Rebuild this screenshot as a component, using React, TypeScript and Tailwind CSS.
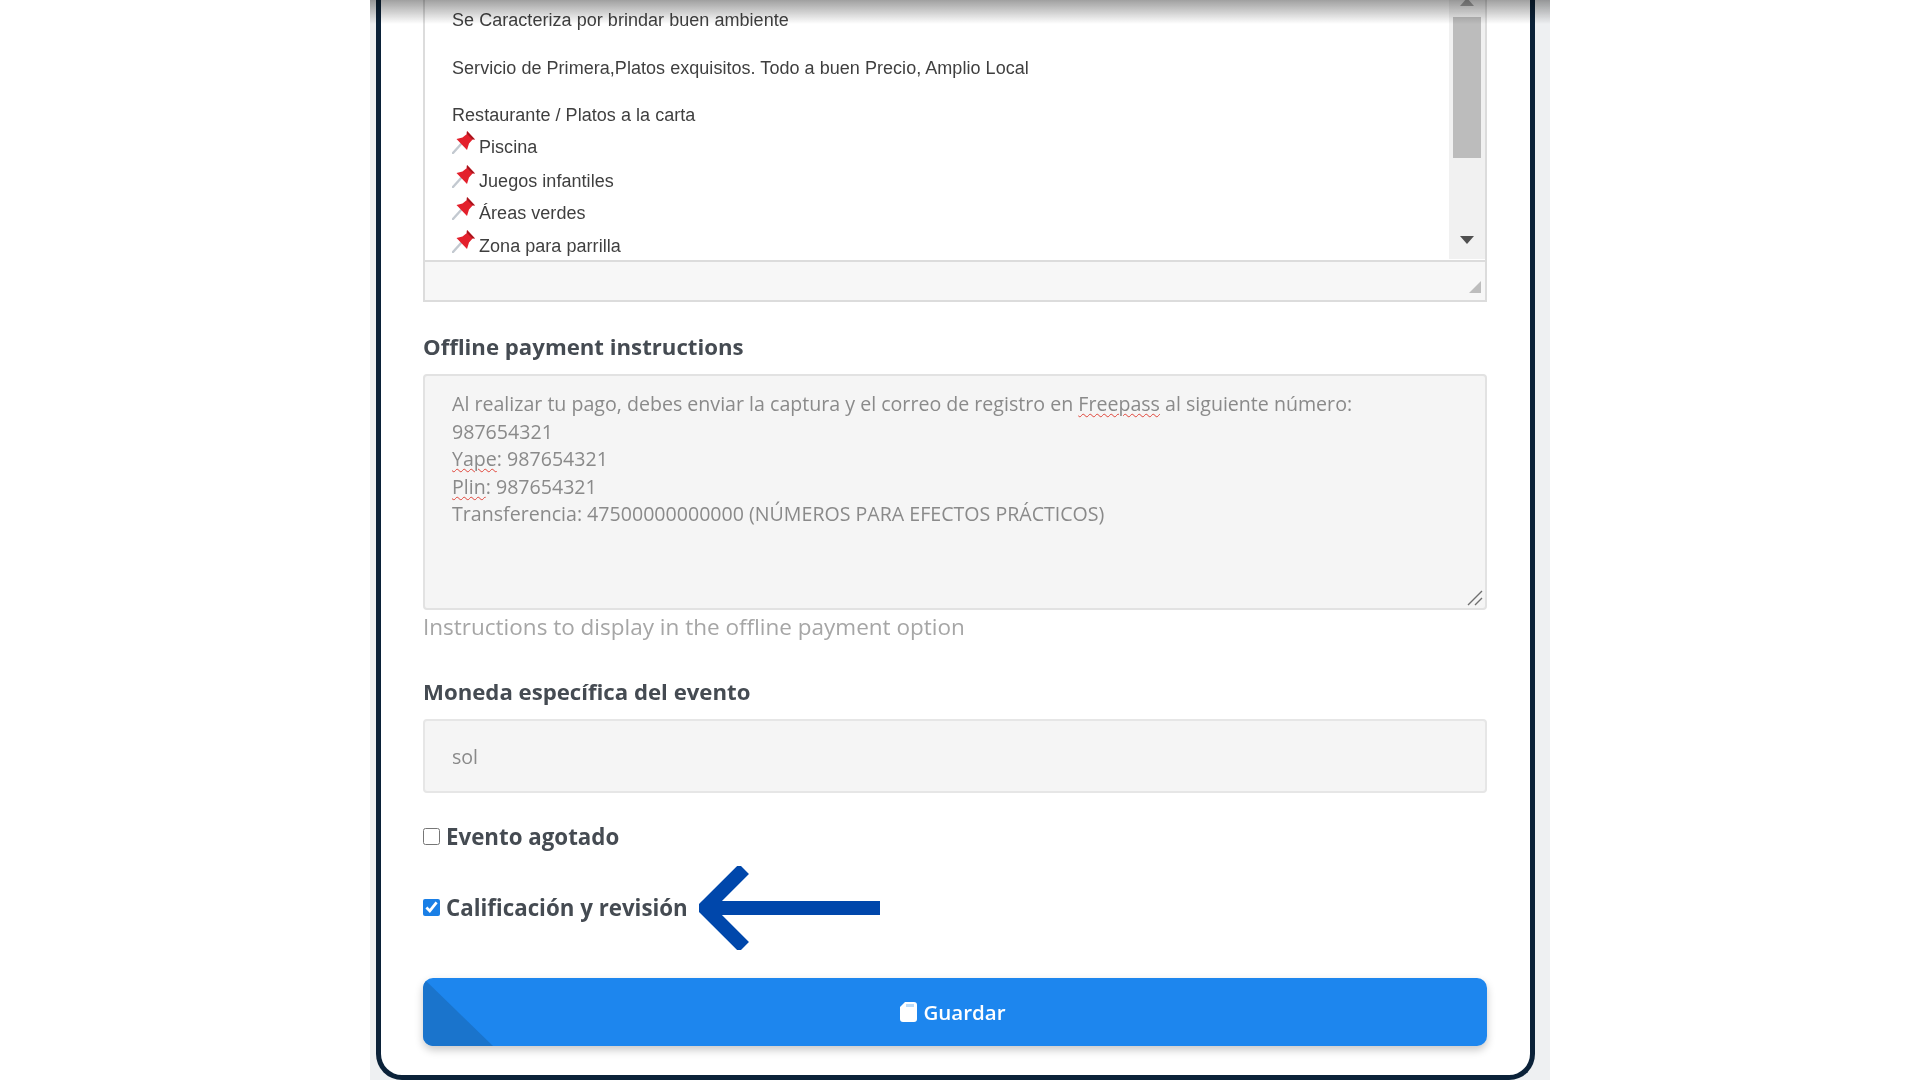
const Pin = () => (
  <svg width="24" height="24" viewBox="0 0 24 24" className="shrink-0">
    <path d="M1 23 L10 13" stroke="#c3c9d0" strokeWidth="2.4" strokeLinecap="round" />
    <path d="M4.5 9 L15 20 L17 13.5 L21 9 L23 9.5 L15 1 L15.5 3.5 L10.5 7.5 Z" fill="#e3202c" />
    <path d="M15 1 L23 9.5 L20.5 9.5 L14.5 3.5 Z" fill="#a8141c" />
  </svg>
);

const SaveIcon = () => (
  <svg width="17" height="20" viewBox="0 0 17 20">
    <path d="M5 0 H14 Q17 0 17 3 V17 Q17 20 14 20 H3 Q0 20 0 17 V5 Z" fill="#ffffff" />
    <rect x="6" y="2" width="8" height="3" fill="#bcdcf9" />
  </svg>
);

const Squiggle = ({ children }: { children: string }) => (
  <span className="underline decoration-wavy decoration-[#e0453a] decoration-1 underline-offset-2">{children}</span>
);

const pins = [
  { label: 'Piscina', className: 'h-[34px]' },
  { label: 'Juegos infantiles', className: 'h-[32px]' },
  { label: 'Áreas verdes', className: 'h-[33px]' },
  { label: 'Zona para parrilla', className: 'h-[33px]' },
];

const Editor = () => (
  <div className="border-2 border-t-0 border-[#dcdcdc] bg-white">
    <div className="flex h-[260px] overflow-hidden">
      <div className="flex-1 pl-[27px] pt-[8px] font-['Liberation_Sans',sans-serif] text-[18px] tracking-[0.04px] text-[#3f3f3f]">
        <p className="h-[24px] leading-[24px]">Se Caracteriza por brindar buen ambiente</p>
        <p className="mt-[24px] h-[24px] leading-[24px]">Servicio de Primera,Platos exquisitos. Todo a buen Precio, Amplio Local</p>
        <p className="mt-[23px] h-[24px] leading-[24px]">Restaurante / Platos a la carta</p>
        <div className="mt-[3px]">
          {pins.map((pin) => (
            <div key={pin.label} className={`flex items-start gap-[3px] ${pin.className}`}>
              <Pin />
              <span className="mt-[5px] leading-[24px]">{pin.label}</span>
            </div>
          ))}
        </div>
      </div>
      <div className="relative flex h-[259px] w-[36px] flex-col items-center bg-[#f1f1f1]">
        <div className="mt-[-2px] h-0 w-0 border-x-[7px] border-b-[8px] border-x-transparent border-b-[#a3a3a3]" />
        <div className="mt-[11px] h-[141px] w-[28px] bg-[#bcbcbc]" />
        <div className="mt-[78px] h-0 w-0 border-x-[7px] border-t-[8px] border-x-transparent border-t-[#505050]" />
      </div>
    </div>
    <div className="relative h-[40px] border-t-2 border-[#dcdcdc] bg-[#f7f7f7]">
      <svg width="14" height="14" viewBox="0 0 14 14" className="absolute bottom-[6px] right-[3px]">
        <path d="M13 1 V13 H1 Z" fill="#bdbdbd" />
      </svg>
    </div>
  </div>
);

export default function App() {
  return (
    <div className="flex h-screen items-end overflow-hidden bg-white pl-[370px] font-['Open_Sans',sans-serif] blur-[0.6px]">
      <div className="relative w-[1180px] shrink-0 bg-[#eef0f2] pl-[6px] pr-[15px]">
        <div className="absolute inset-x-0 top-0 z-10 h-[24px] bg-gradient-to-b from-[#a0a0a0] to-transparent mix-blend-multiply" />
        <div className="rounded-b-[26px] border-x-[5px] border-b-[5px] border-[#0b2239] bg-white pb-[29px] pl-[42px] pr-[43px]">
          <Editor />

          <label className="mt-[30px] block h-[30px] text-[22.2px] font-bold leading-[30px] text-[#454b52]">
            Offline payment instructions
          </label>
          <div className="relative mt-[12px] h-[236px] rounded-[4px] border-2 border-[#e2e2e2] bg-[#f5f5f5] pl-[27px] pt-[14px] text-[19.6px] leading-[27.5px] text-[#8a8a8a]">
            <p>
              Al realizar tu pago, debes enviar la captura y el correo de registro en <Squiggle>Freepass</Squiggle> al siguiente número:
            </p>
            <p>987654321</p>
            <p>
              <Squiggle>Yape</Squiggle>: 987654321
            </p>
            <p>
              <Squiggle>Plin</Squiggle>: 987654321
            </p>
            <p>Transferencia: 47500000000000 (NÚMEROS PARA EFECTOS PRÁCTICOS)</p>
            <svg width="18" height="18" viewBox="0 0 18 18" className="absolute bottom-[1px] right-[1px]">
              <path d="M2 16 L16 2 M9 16 L16 9" stroke="#6f6f6f" strokeWidth="1.4" />
            </svg>
          </div>
          <p className="mt-[2px] h-[30px] text-[22.5px] leading-[30px] text-[#a6a6a6]">Instructions to display in the offline payment option</p>

          <label className="mt-[35px] block h-[30px] text-[22.2px] font-bold leading-[30px] text-[#454b52]">
            Moneda específica del evento
          </label>
          <input
            readOnly
            value="sol"
            className="mt-[12px] block h-[74px] w-full rounded-[4px] border-2 border-[#e6e6e6] bg-[#f5f5f5] pl-[27px] text-[19.6px] text-[#8a8a8a] outline-none"
          />

          <label className="mt-[29px] flex h-[30px] items-center gap-[6px] text-[22.3px] font-bold text-[#454b52]">
            <input type="checkbox" className="mb-[1px] h-[17px] w-[17px] accent-[#1a7fe6]" />
            Evento agotado
          </label>

          <div className="relative mt-[41px]">
            <label className="flex h-[30px] items-center gap-[6px] text-[22.3px] font-bold text-[#454b52]">
              <input type="checkbox" defaultChecked className="mb-[2px] h-[17px] w-[17px] accent-[#1a7fe6]" />
              Calificación y revisión
            </label>
            <svg width="182" height="84" viewBox="0 0 182 84" className="absolute left-[276px] top-[-27px]">
              <path d="M181 42 H8 M45 3 L6 42 L45 81" fill="none" stroke="#0047ab" strokeWidth="14" />
            </svg>
          </div>

          <button className="relative mt-[55px] flex h-[68px] w-full items-center justify-center overflow-hidden rounded-[10px] bg-[#1d86ee] text-[20.5px] font-semibold text-white shadow-[0_4px_8px_rgba(0,0,0,0.22)]">
            <span className="absolute inset-0 bg-[#1a74cc] [clip-path:polygon(0_0,70px_100%,0_100%)]" />
            <span className="relative flex items-center gap-[6px] pr-[4px]">
              <SaveIcon />
              Guardar
            </span>
          </button>
        </div>
      </div>
    </div>
  );
}
